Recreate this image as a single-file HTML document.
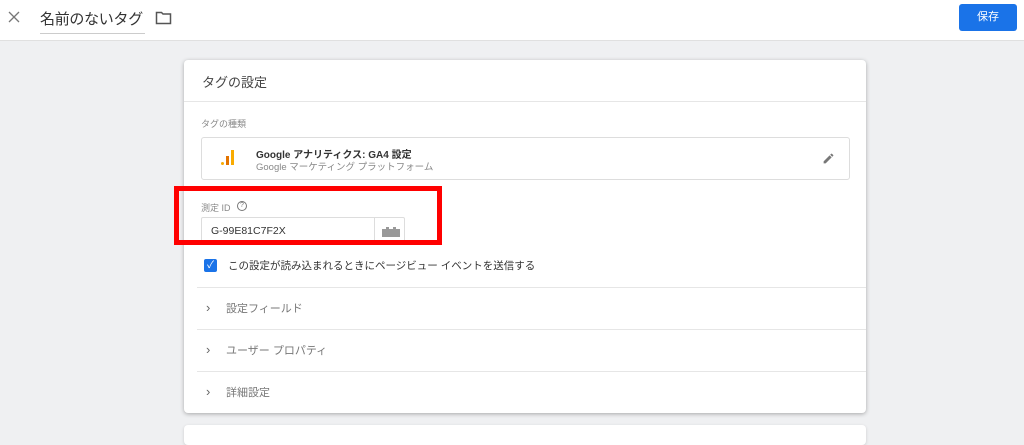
<!DOCTYPE html>
<html><head><meta charset="utf-8"><style>
*{box-sizing:border-box;margin:0;padding:0}
body{width:1024px;height:432px;overflow:hidden;background:#eff0f2;font-family:"Liberation Sans","Noto Sans CJK JP",sans-serif;position:relative;color:#333}
.top{position:absolute;left:0;top:0;width:1024px;height:41px;background:#fff;border-bottom:1px solid #e0e0e0}
.abs{position:absolute;white-space:nowrap}
.card{position:absolute;left:184px;top:60px;width:682px;height:353px;background:#fff;border-radius:4px;box-shadow:0 1px 4px rgba(0,0,0,.3)}
.line{position:absolute;height:1px;background:#e6e6e6}
.row{position:absolute;left:22px;font-size:11px;color:#777;white-space:nowrap}
.row b{font-weight:normal;font-size:13px;color:#666;display:inline-block;width:20px}
</style></head><body>
<div class="top">
<svg class="abs" style="left:8px;top:11px" width="12" height="12"><path d="M1 1L11 11M11 1L1 11" stroke="#777" stroke-width="1.3"/></svg>
<div class="abs" style="left:40px;top:8px;font-size:15px;color:#333;border-bottom:1px solid #ccc;padding-bottom:4px;width:105px;letter-spacing:-0.3px">名前のないタグ</div>
<svg class="abs" style="left:155px;top:11px" width="17" height="14" viewBox="0 0 17 14"><path d="M1.5 1.5h5l1.5 1.5h7.5v9.5h-14z" fill="none" stroke="#555" stroke-width="1.5"/></svg>
<div class="abs" style="left:959px;top:4px;width:58px;height:27px;background:#1a73e8;border-radius:3px;color:#fff;font-size:11px;text-align:center;line-height:27px">保存</div>
</div>
<div class="card">
<div class="abs" style="left:18px;top:12px;font-size:13px;color:#444">タグの設定</div>
<div class="line" style="left:0;top:41px;width:682px"></div>
<div class="abs" style="left:17px;top:57px;font-size:9px;color:#888">タグの種類</div>
<div class="abs" style="left:17px;top:77px;width:649px;height:43px;border:1px solid #ddd;border-radius:3px">
<svg class="abs" style="left:18px;top:10px" width="16" height="20"><rect x="1" y="14" width="3" height="3" rx="1.5" fill="#f9ab00"/><rect x="6" y="8" width="3" height="9" fill="#e37400"/><rect x="11" y="2" width="3" height="15" fill="#f9ab00"/></svg>
<div class="abs" style="left:54px;top:8px;font-size:10px;font-weight:bold;color:#333">Google アナリティクス: GA4 設定</div>
<div class="abs" style="left:54px;top:21px;font-size:9.5px;color:#888">Google マーケティング プラットフォーム</div>
<svg class="abs" style="left:620px;top:14px" width="13" height="13" viewBox="0 0 24 24"><path d="M3 17.25V21h3.75L17.8 9.94l-3.75-3.75zM20.7 7.04a1 1 0 000-1.41l-2.34-2.34a1 1 0 00-1.41 0l-1.830 1.83 3.75 3.75z" fill="#777"/></svg>
</div>
<div class="abs" style="left:17px;top:141px;font-size:9px;color:#888">測定 ID</div>
<div class="abs" style="left:53px;top:141px;width:10px;height:10px;border:1.2px solid #777;border-radius:50%;font-size:7px;line-height:8px;text-align:center;color:#777">?</div>
<div class="abs" style="left:17px;top:157px;width:204px;height:28px;border:1px solid #ddd;border-radius:2px">
<div class="abs" style="left:9px;top:7px;font-size:10.5px;color:#333">G-99E81C7F2X</div>
<div class="abs" style="left:172px;top:0;width:1px;height:27px;background:#ddd"></div>
<svg class="abs" style="left:180px;top:8px" width="18" height="11"><path d="M0 3h4v-2h3v2h4v-2h3v2h4v8h-18z" fill="#999"/></svg>
</div>
<div class="abs" style="left:-10px;top:126px;width:268px;height:59px;border:5px solid #ff0000"></div>
<div class="abs" style="left:20px;top:199px;width:13px;height:13px;background:#1a73e8;border-radius:2px;color:#fff;font-size:10px;line-height:13px;text-align:center">✓</div>
<div class="abs" style="left:44px;top:198px;font-size:10.5px;color:#333">この設定が読み込まれるときにページビュー イベントを送信する</div>
<div class="line" style="left:13px;top:227px;width:669px"></div>
<div class="row" style="top:240px"><b>›</b>設定フィールド</div>
<div class="line" style="left:13px;top:269px;width:669px"></div>
<div class="row" style="top:282px"><b>›</b>ユーザー プロパティ</div>
<div class="line" style="left:13px;top:311px;width:669px"></div>
<div class="row" style="top:324px"><b>›</b>詳細設定</div>
</div>
<div class="abs" style="left:184px;top:425px;width:682px;height:20px;background:#fff;border-radius:4px;box-shadow:0 1px 3px rgba(0,0,0,.15)"></div>
</body></html>
